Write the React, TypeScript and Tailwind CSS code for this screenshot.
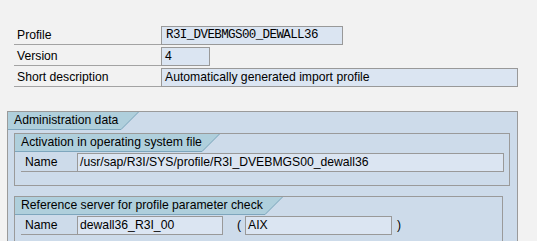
import React from "react";

const TAB = "#afcfdc";
const TAB_LINE = "#7ea6bd";

function GroupTab({ label, width }: { label: string; width: number }) {
  return (
    <div className="flex h-[18px]">
      <div
        className="h-[18px] bg-[#afcfdc] border-b border-[#7ea6bd] pl-[6px] leading-[17px] whitespace-nowrap"
        style={{ width }}
      >
        {label}
      </div>
      <svg width="18" height="18" viewBox="0 0 18 18" className="block">
        <polygon points="0,0 18,0 0,18" fill={TAB} />
        <line x1="0" y1="17.5" x2="17.5" y2="0" stroke={TAB_LINE} strokeWidth="1" />
      </svg>
    </div>
  );
}

function HeaderRow({
  label,
  value,
  width,
  mono,
}: {
  label: string;
  value: string;
  width: number;
  mono?: boolean;
}) {
  return (
    <div className="flex h-[19px]">
      <div className="w-[147px] border-b border-[#a3a3a3] pl-[3px] leading-[18px]">{label}</div>
      <div
        className={
          "h-[19px] border border-[#999999] bg-[#dbe5f2] leading-[17px] whitespace-nowrap " +
          (mono
            ? "pl-[4px] font-['Liberation_Mono',monospace] text-[12.5px] tracking-[-0.6px]"
            : "pl-[3px]")
        }
        style={{ width }}
      >
        {value}
      </div>
    </div>
  );
}

export default function App() {
  return (
    <div className="w-[537px] h-[241px] overflow-hidden bg-[#f2f2f2] text-black font-['Liberation_Sans',Arial,sans-serif] text-[12.2px]">
      <div className="pt-[26px] pl-[14px] flex flex-col gap-[2px]">
        <HeaderRow label="Profile" value="R3I_DVEBMGS00_DEWALL36" width={182} mono />
        <HeaderRow label="Version" value="4" width={49} />
        <HeaderRow label="Short description" value="Automatically generated import profile" width={357} />
      </div>

      <div className="mt-[24px] ml-[7px] w-[511px] h-[140px] border border-[#9a9a9a] bg-[#cddbea]">
        <GroupTab label="Administration data" width={113} />

        <div className="mt-[3px] ml-[6px] w-[496px] h-[53px] border border-[#9a9a9a]">
          <GroupTab label="Activation in operating system file" width={187} />
          <div className="flex h-[19px] mt-[1px] pl-[6px]">
            <div className="w-[56px] border-b border-[#9a9a9a] pl-[4px] leading-[18px]">Name</div>
            <div className="w-[427px] h-[19px] border border-[#999999] bg-[#dbe5f2] pl-[2px] leading-[17px] whitespace-nowrap">
              /usr/sap/R3I/SYS/profile/R3I_DVEBMGS00_dewall36
            </div>
          </div>
        </div>

        <div className="mt-[10px] ml-[6px] w-[489px] h-[60px] border border-[#9a9a9a]">
          <GroupTab label="Reference server for profile parameter check" width={250} />
          <div className="flex items-center h-[19px] mt-[1px] pl-[6px]">
            <div className="w-[56px] h-[19px] border-b border-[#9a9a9a] pl-[4px] leading-[18px]">Name</div>
            <div className="w-[146px] h-[19px] border border-[#999999] bg-[#dbe5f2] pl-[2px] leading-[17px]">
              dewall36_R3I_00
            </div>
            <span className="ml-[14px] w-[8px]">(</span>
            <div className="w-[147px] h-[19px] border border-[#999999] bg-[#dbe5f2] pl-[2px] leading-[17px]">
              AIX
            </div>
            <span className="ml-[5px]">)</span>
          </div>
        </div>
      </div>
    </div>
  );
}
